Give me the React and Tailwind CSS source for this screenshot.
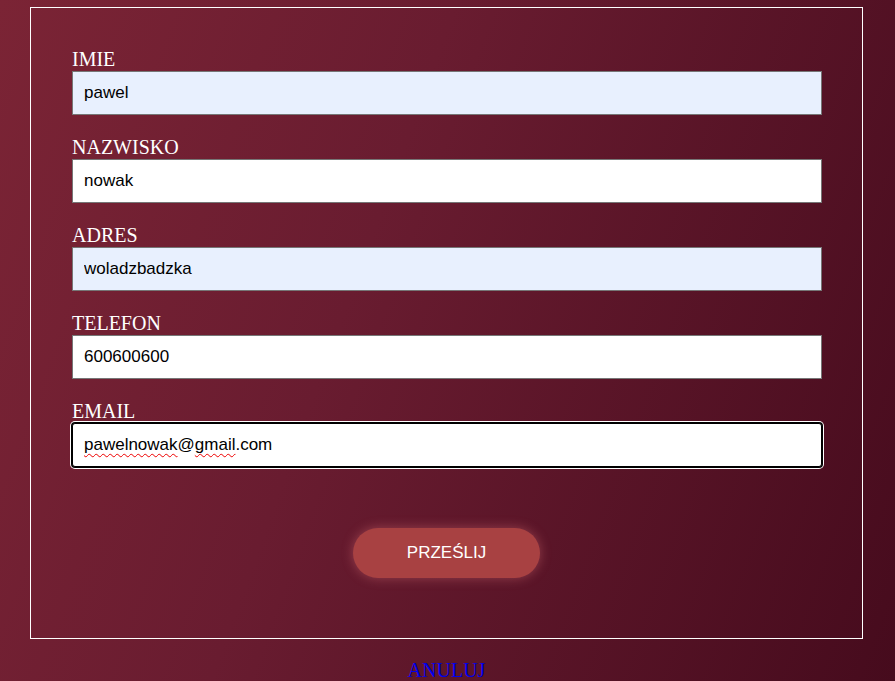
export default function App() {
  const fields = [
    { label: 'IMIE', value: 'pawel', filled: true },
    { label: 'NAZWISKO', value: 'nowak' },
    { label: 'ADRES', value: 'woladzbadzka', filled: true },
    { label: 'TELEFON', value: '600600600' },
    { label: 'EMAIL', value: 'pawelnowak@gmail.com', focused: true },
  ];

  const squiggle = 'underline decoration-wavy decoration-[#e00] decoration-1 underline-offset-[3px]';

  return (
    <div className="min-h-screen bg-[linear-gradient(110deg,#7b2435_0%,#691c30_40%,#460b1d_100%)] pt-[7px] font-['Liberation_Serif',serif]">
      <form className="ml-[30px] w-[833px] border border-white px-[41px] pt-[40px] pb-[60px]">
        {fields.map((f, i) => (
          <div key={f.label} className={i ? 'mt-[21px]' : ''}>
            <label className="block text-[20px] leading-[23px] text-white">{f.label}</label>
            <div className="relative">
              <input
                defaultValue={f.value}
                spellCheck={false}
                className={
                  'block h-[44px] w-[750px] border border-[#767676] px-[11px] font-["Liberation_Sans",Arial,sans-serif] text-[17px] text-black outline-none ' +
                  (f.filled ? 'bg-[#e8f0fe] ' : 'bg-white ') +
                  (f.focused ? 'rounded-[3px] border-black shadow-[0_0_0_1px_#000,0_0_0_2px_#fff]' : '')
                }
              />
              {f.focused && (
                <span className="pointer-events-none absolute left-[12px] top-0 flex h-[44px] items-center font-['Liberation_Sans',Arial,sans-serif] text-[17px] text-transparent">
                  <span className={squiggle}>pawelnowak</span>@<span className={squiggle}>gmail</span>.com
                </span>
              )}
            </div>
          </div>
        ))}
        <div className="mt-[61px] flex justify-center">
          <button
            type="button"
            className="h-[50px] w-[187px] rounded-full bg-[#a84142] font-['Liberation_Sans',Arial,sans-serif] text-[17px] text-white shadow-[0_0_12px_rgba(255,140,140,0.35)]"
          >
            PRZEŚLIJ
          </button>
        </div>
      </form>
      <div className="ml-[30px] mt-[20px] w-[833px] text-center text-[20px] leading-[23px]">
        <a href="#" className="text-[#0000ee] no-underline">ANULUJ</a>
      </div>
    </div>
  );
}
